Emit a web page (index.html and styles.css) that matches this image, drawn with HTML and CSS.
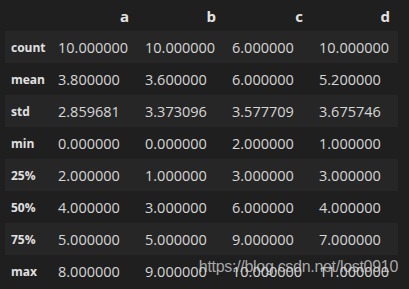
FILE: index.html
```html
<!DOCTYPE html>
<html>
<head>
<meta charset="utf-8">
<link rel="stylesheet" href="styles.css">
</head>
<body>
<div class="frame">
<table class="df">
  <colgroup>
    <col class="c-idx"><col class="c-val"><col class="c-val"><col class="c-val"><col class="c-val">
  </colgroup>
  <thead>
    <tr><th></th><th>a</th><th>b</th><th>c</th><th>d</th></tr>
  </thead>
  <tbody>
    <tr><th>count</th><td>10.000000</td><td>10.000000</td><td>6.000000</td><td>10.000000</td></tr>
    <tr><th>mean</th><td>3.800000</td><td>3.600000</td><td>6.000000</td><td>5.200000</td></tr>
    <tr><th>std</th><td>2.859681</td><td>3.373096</td><td>3.577709</td><td>3.675746</td></tr>
    <tr><th>min</th><td>0.000000</td><td>0.000000</td><td>2.000000</td><td>1.000000</td></tr>
    <tr><th>25%</th><td>2.000000</td><td>1.000000</td><td>3.000000</td><td>3.000000</td></tr>
    <tr><th>50%</th><td>4.000000</td><td>3.000000</td><td>6.000000</td><td>4.000000</td></tr>
    <tr><th>75%</th><td>5.000000</td><td>5.000000</td><td>9.000000</td><td>7.000000</td></tr>
    <tr><th>max</th><td>8.000000</td><td>9.000000</td><td>10.000000</td><td>11.000000</td></tr>
  </tbody>
</table>
<div class="watermark">https://blog.csdn.net/lost0910</div>
</div>
</body>
</html>
```
FILE: styles.css
```css
html, body {
  margin: 0;
  padding: 0;
  background: #1f1f1f;
}
.frame {
  position: relative;
  width: 409px;
  height: 289px;
  overflow: hidden;
}
.df {
  margin-left: 5px;
  border-collapse: collapse;
  table-layout: fixed;
  width: 393px;
  font-family: "Open Sans", "Noto Sans", sans-serif;
  color: #d6d6d6;
}
.c-idx { width: 45px; }
.c-val { width: 87px; }
.df thead th {
  height: 31px;
  padding: 0 8px 0 0;
  text-align: right;
  font-weight: 700;
  font-size: 15px;
  color: #e2e2e2;
}
.df tbody tr { height: 32px; }
.df tbody tr:nth-child(odd) { background: #262626; }
.df tbody th {
  text-align: left;
  padding: 0 0 0 6px;
  font-weight: 700;
  font-size: 12px;
  color: #e0e0e0;
  white-space: nowrap;
}
.df td {
  padding: 0 0 0 8px;
  font-size: 14.5px;
  text-align: left;
  white-space: nowrap;
}
.watermark {
  position: absolute;
  right: 11px;
  top: 258px;
  font-family: "Liberation Sans", Arial, sans-serif;
  font-size: 16px;
  letter-spacing: -0.3px;
  color: rgba(215, 215, 215, 0.75);
  white-space: nowrap;
}
```
